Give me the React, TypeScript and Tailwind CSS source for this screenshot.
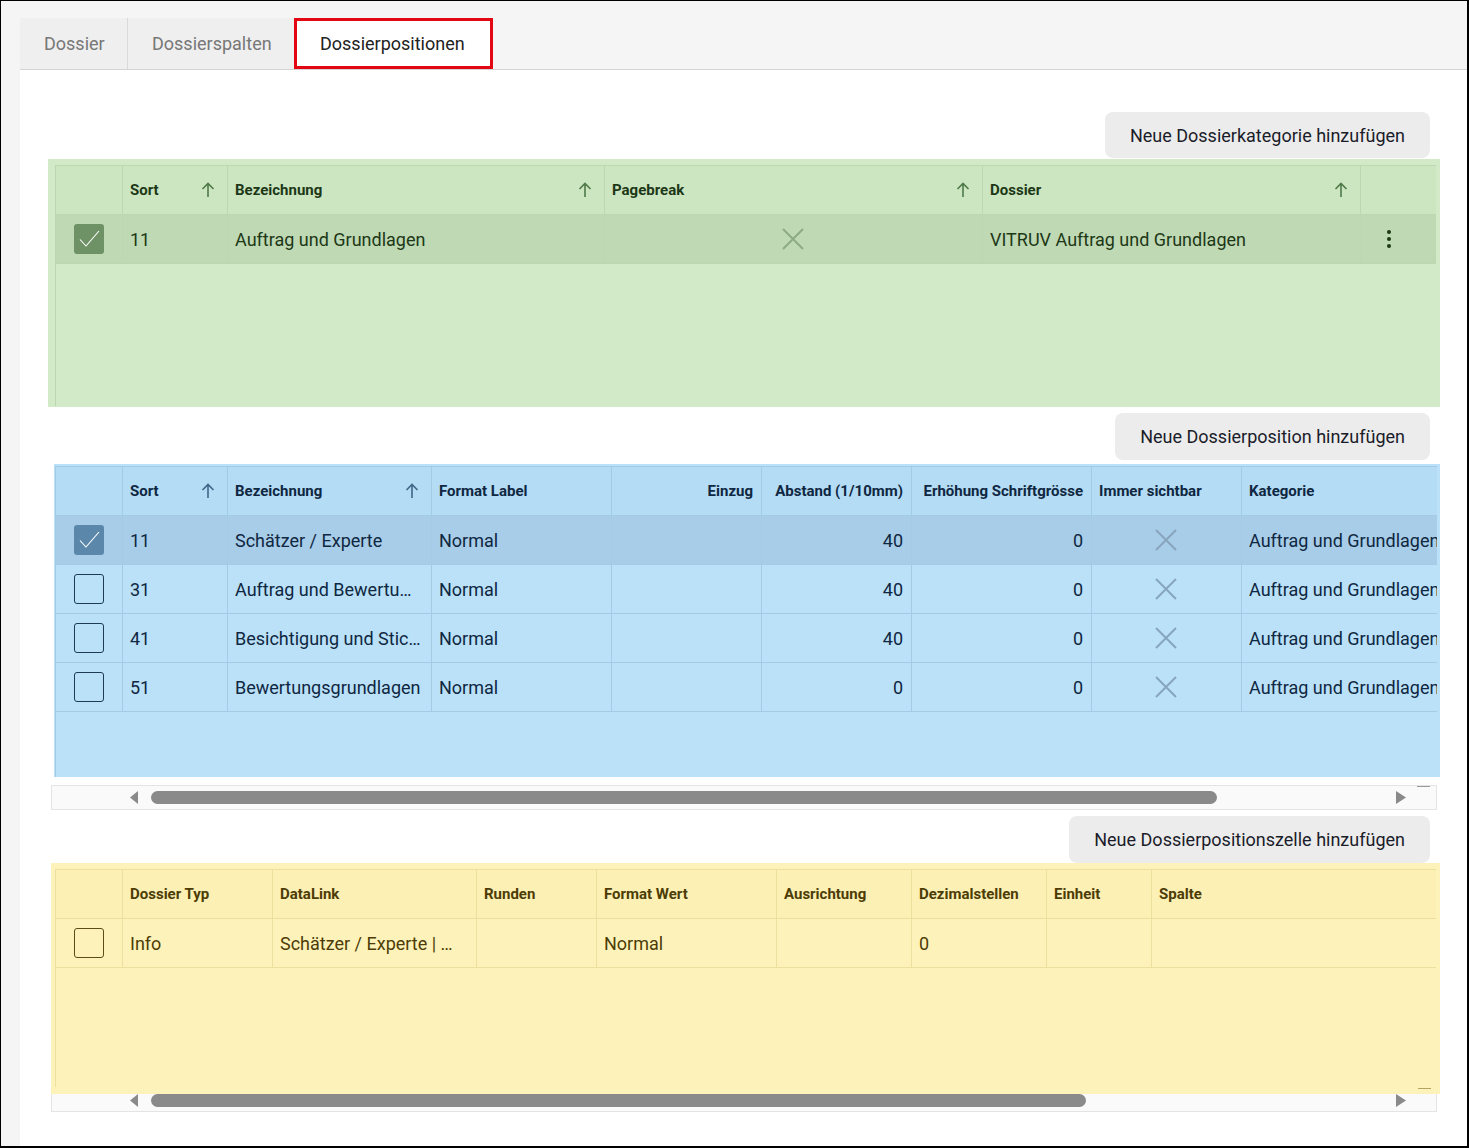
import React from "react";

type Col = { label: string; w: number; sort?: boolean; align?: "left" | "right" | "center" };
type Theme = {
  head: string;
  sel: string;
  line: string;
  text: string;
  arrow: string;
  x: string;
  check: string;
  box: string;
};

const green: Theme = {
  head: "bg-[#cce6c2]",
  sel: "bg-[#bfd9b4]",
  line: "border-[#bcd8b1]",
  text: "text-[#1d3816]",
  arrow: "#4f7a47",
  x: "#8cab84",
  check: "bg-[#6e9166]",
  box: "border-[#2b4a26]",
};

const blue: Theme = {
  head: "bg-[#b4dcf5]",
  sel: "bg-[#a8cde8]",
  line: "border-[#a3cbe6]",
  text: "text-[#0f2741]",
  arrow: "#3f6788",
  x: "#87a6bd",
  check: "bg-[#5b87aa]",
  box: "border-[#1d3a57]",
};

const yellow: Theme = {
  head: "bg-[#fcf0b4]",
  sel: "bg-[#f5e7a6]",
  line: "border-[#ede09f]",
  text: "text-[#4d3c06]",
  arrow: "#7d6a2a",
  x: "#b4a46a",
  check: "bg-[#b39b4a]",
  box: "border-[#5e4c18]",
};

const ArrowUp = ({ color }: { color: string }) => (
  <svg width="18" height="18" viewBox="0 0 18 18" fill="none">
    <path d="M9 16V2.5M3.5 8L9 2.5L14.5 8" stroke={color} strokeWidth="1.6" />
  </svg>
);

const Cross = ({ color }: { color: string }) => (
  <svg width="24" height="24" viewBox="0 0 24 24" fill="none">
    <path d="M2 2L22 22M22 2L2 22" stroke={color} strokeWidth="2" />
  </svg>
);

const Checkbox = ({ checked, t }: { checked?: boolean; t: Theme }) =>
  checked ? (
    <div className={`w-[30px] h-[30px] rounded-[3px] ${t.check} flex items-center justify-center`}>
      <svg width="30" height="30" viewBox="0 0 30 30" fill="none">
        <path d="M6 15.5L12 22L25 7" stroke="white" strokeWidth="1.1" />
      </svg>
    </div>
  ) : (
    <div className={`w-[30px] h-[30px] rounded-[3px] border ${t.box}`} />
  );

const Kebab = () => (
  <div className="flex flex-col gap-[3px]">
    <span className="w-[4px] h-[4px] rounded-full bg-[#1d3816]" />
    <span className="w-[4px] h-[4px] rounded-full bg-[#1d3816]" />
    <span className="w-[4px] h-[4px] rounded-full bg-[#1d3816]" />
  </div>
);

type Cell = string | { x: true } | { kebab: true };

const Grid = ({
  cols,
  rows,
  t,
  height,
  width,
  selected,
}: {
  cols: Col[];
  rows: { checked?: boolean; cells: Cell[] }[];
  t: Theme;
  height: number;
  width: number;
  selected?: number;
}) => (
  <div
    className={`border-l border-t ${t.line} overflow-hidden ${t.text}`}
    style={{ height, width }}
  >
    <div className={`flex h-[49px] border-b ${t.line} ${t.head}`}>
      <div className={`w-[67px] shrink-0 border-r ${t.line}`} />
      {cols.map((c, i) => (
        <div
          key={i}
          className={`shrink-0 flex items-center pl-[7px] pr-2 text-[15px] font-bold whitespace-nowrap ${
            i < cols.length - 1 ? `border-r ${t.line}` : ""
          } ${c.align === "right" ? "justify-end" : ""}`}
          style={{ width: c.w }}
        >
          <span>{c.label}</span>
          {c.sort && (
            <span className="ml-auto mr-[2px]">
              <ArrowUp color={t.arrow} />
            </span>
          )}
        </div>
      ))}
    </div>
    {rows.map((r, ri) => (
      <div key={ri} className={`flex h-[49px] border-b ${t.line} ${selected === ri ? t.sel : ""}`}>
        <div className={`w-[67px] shrink-0 border-r ${t.line} flex items-center justify-center`}>
          <Checkbox checked={r.checked} t={t} />
        </div>
        {r.cells.map((c, ci) => {
          const col = cols[ci];
          const align =
            typeof c !== "string"
              ? "x" in c
                ? "justify-center"
                : "justify-start pl-[26px]"
              : col.align === "right"
              ? "justify-end"
              : "";
          return (
            <div
              key={ci}
              className={`shrink-0 flex items-center pl-[7px] pr-2 text-[18px] whitespace-nowrap overflow-hidden ${
                ci < cols.length - 1 ? `border-r ${t.line}` : ""
              } ${align}`}
              style={{ width: col.w }}
            >
              {typeof c === "string" ? c : "x" in c ? <Cross color={t.x} /> : <Kebab />}
            </div>
          );
        })}
      </div>
    ))}
  </div>
);

const AddButton = ({ label, h }: { label: string; h: number }) => (
  <div className="flex justify-end pr-[37px]">
    <button
      className="bg-[#ececec] rounded-lg px-[25px] text-[18px] text-[#1b1c2a] whitespace-nowrap"
      style={{ height: h }}
    >
      {label}
    </button>
  </div>
);

const ScrollStrip = ({ thumb, h, top }: { thumb: number; h: number; top: boolean }) => (
  <div
    className={`relative ml-[31px] w-[1386px] bg-[#fafafa] border-l border-r border-b border-[#e4e4e4] ${
      top ? "border-t" : ""
    } flex ${top ? "items-center" : "items-start"} pl-[77px] pr-[30px]`}
    style={{ height: h }}
  >
    <svg width="9" height="13" viewBox="0 0 9 13">
      <path d="M9 0L1 6.5L9 13Z" fill="#8a8a8a" />
    </svg>
    <div className="ml-[13px] h-[13px] rounded-full bg-[#8a8a8a]" style={{ width: thumb }} />
    <div className="flex-1" />
    <svg width="10" height="13" viewBox="0 0 10 13">
      <path d="M0 0L10 6.5L0 13Z" fill="#8a8a8a" />
    </svg>
    {top && <span className="absolute top-0 right-[6px] w-[13px] h-px bg-[#9a9a9a]" />}
  </div>
);

export default function App() {
  const greenCols: Col[] = [
    { label: "Sort", w: 105, sort: true },
    { label: "Bezeichnung", w: 377, sort: true },
    { label: "Pagebreak", w: 378, sort: true },
    { label: "Dossier", w: 378, sort: true },
    { label: "", w: 76 },
  ];
  const blueCols: Col[] = [
    { label: "Sort", w: 105, sort: true },
    { label: "Bezeichnung", w: 204, sort: true },
    { label: "Format Label", w: 180 },
    { label: "Einzug", w: 150, align: "right" },
    { label: "Abstand (1/10mm)", w: 150, align: "right" },
    { label: "Erhöhung Schriftgrösse", w: 180, align: "right" },
    { label: "Immer sichtbar", w: 150 },
    { label: "Kategorie", w: 230 },
  ];
  const yellowCols: Col[] = [
    { label: "Dossier Typ", w: 150 },
    { label: "DataLink", w: 204 },
    { label: "Runden", w: 120 },
    { label: "Format Wert", w: 180 },
    { label: "Ausrichtung", w: 135 },
    { label: "Dezimalstellen", w: 135 },
    { label: "Einheit", w: 105 },
    { label: "Spalte", w: 285 },
  ];
  const X = { x: true as const };

  return (
    <div
      className="w-[1469px] h-[1148px] border-l border-t border-r-2 border-b-2 border-black bg-[#f5f5f5] pt-[17px] pl-[19px] flex flex-col overflow-hidden"
      style={{ fontFamily: "Roboto, 'Noto Sans', sans-serif" }}
    >
      <div className="flex h-[52px] border-b border-[#d4d4d4] shrink-0">
        <div className="w-[108px] bg-[#efefef] border-r border-[#dadada] flex items-center pl-[24px] text-[18px] text-[#777777]">
          Dossier
        </div>
        <div className="w-[166px] bg-[#efefef] flex items-center pl-[24px] text-[18px] text-[#777777]">
          Dossierspalten
        </div>
        <div className="w-[199px] bg-white border-[3px] border-[#e30613] flex items-center pl-[23px] text-[18px] text-[#222222]">
          Dossierpositionen
        </div>
      </div>

      <div className="flex-1 bg-white">
        <div className="mt-[42px]">
          <AddButton label="Neue Dossierkategorie hinzufügen" h={46} />
        </div>

        <div className="mt-[1px] ml-[28px] w-[1392px] h-[248px] bg-[#d3eac9] pt-[6px] pl-[7px]">
          <Grid
            cols={greenCols}
            t={green}
            width={1381}
            height={241}
            selected={0}
            rows={[
              {
                checked: true,
                cells: ["11", "Auftrag und Grundlagen", X, "VITRUV Auftrag und Grundlagen", { kebab: true }],
              },
            ]}
          />
        </div>

        <div className="mt-[6px]">
          <AddButton label="Neue Dossierposition hinzufügen" h={47} />
        </div>

        <div className="mt-[4px] ml-[34px] w-[1386px] h-[313px] bg-[#bae1f8] pt-[2px] pl-[1px]">
          <Grid
            cols={blueCols}
            t={blue}
            width={1382}
            height={311}
            selected={0}
            rows={[
              { checked: true, cells: ["11", "Schätzer / Experte", "Normal", "", "40", "0", X, "Auftrag und Grundlagen"] },
              { cells: ["31", "Auftrag und Bewertu…", "Normal", "", "40", "0", X, "Auftrag und Grundlagen"] },
              { cells: ["41", "Besichtigung und Stic…", "Normal", "", "40", "0", X, "Auftrag und Grundlagen"] },
              { cells: ["51", "Bewertungsgrundlagen", "Normal", "", "0", "0", X, "Auftrag und Grundlagen"] },
            ]}
          />
        </div>

        <div className="mt-[8px]">
          <ScrollStrip thumb={1066} h={25} top />
        </div>

        <div className="mt-[6px]">
          <AddButton label="Neue Dossierpositionszelle hinzufügen" h={47} />
        </div>

        <div className="relative ml-[31px] w-[1389px] h-[231px] bg-[#fdf3ba] pt-[6px] pl-[4px]">
          <Grid
            cols={yellowCols}
            t={yellow}
            width={1381}
            height={218}
            rows={[{ cells: ["Info", "Schätzer / Experte | …", "", "Normal", "", "0", "", ""] }]}
          />
          <span className="absolute bottom-[5px] right-[9px] w-[13px] h-px bg-[#b3a466]" />
        </div>
        <ScrollStrip thumb={935} h={18} top={false} />
      </div>
    </div>
  );
}
